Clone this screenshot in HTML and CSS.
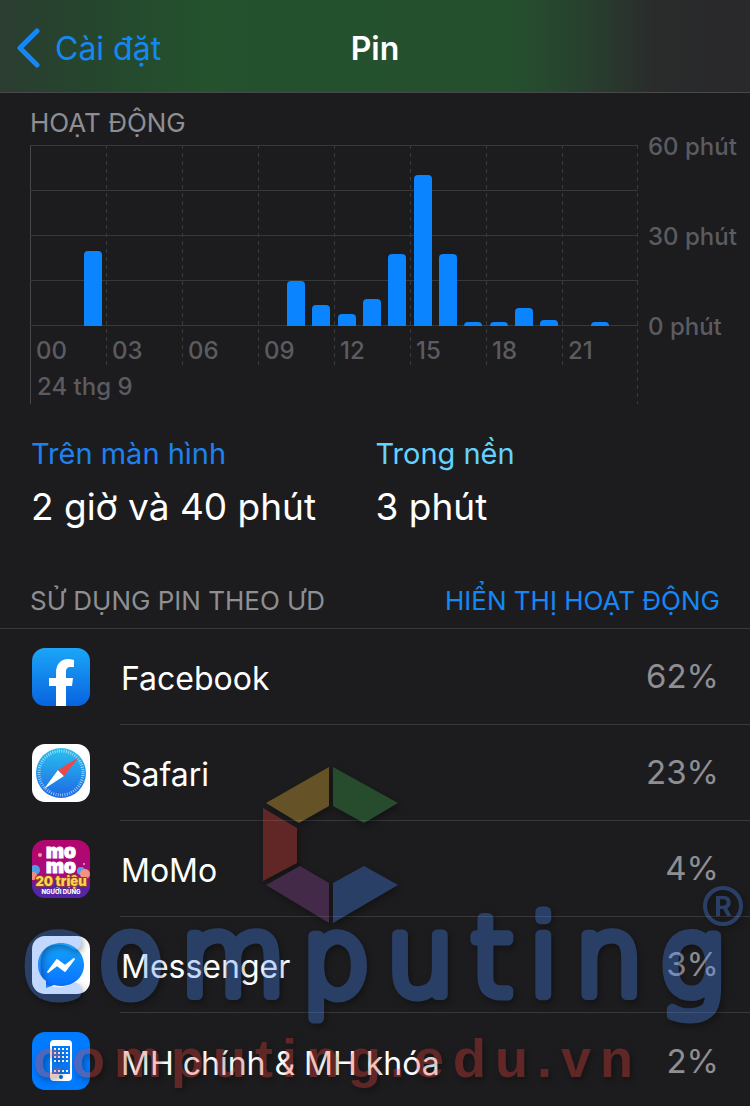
FILE: index.html
```html
<!DOCTYPE html>
<html lang="vi">
<head>
<meta charset="utf-8">
<meta name="viewport" content="width=device-width, initial-scale=1">
<title>Pin</title>
<link rel="stylesheet" href="styles.css">
</head>
<body>
<div class="screen">
  <header class="nav">
    <a class="back" href="#"><svg class="chevron" viewBox="0 0 24 40" aria-hidden="true"><path d="M20 3 3 20l17 17"/></svg>Cài đặt</a>
    <h1 class="nav-title">Pin</h1>
  </header>

  <main>
    <section>
      <h2 class="caption activity">Hoạt động</h2>
      <div class="chart">
        <div class="day">
          <div class="hours">
            <div class="slot"><div class="bars"><i></i><i></i><i style="height:41.7%"></i></div><span>00</span></div>
            <div class="slot"><div class="bars"></div><span>03</span></div>
            <div class="slot"><div class="bars"></div><span>06</span></div>
            <div class="slot"><div class="bars"><i></i><i style="height:25%"></i><i style="height:11.7%"></i></div><span>09</span></div>
            <div class="slot"><div class="bars"><i style="height:6.7%"></i><i style="height:15%"></i><i style="height:40%"></i></div><span>12</span></div>
            <div class="slot"><div class="bars"><i style="height:83.3%"></i><i style="height:40%"></i><i style="height:2%"></i></div><span>15</span></div>
            <div class="slot"><div class="bars"><i style="height:2%"></i><i style="height:10%"></i><i style="height:3.3%"></i></div><span>18</span></div>
            <div class="slot"><div class="bars"><i></i><i style="height:2%"></i><i></i></div><span>21</span></div>
          </div>
          <div class="date">24 thg 9</div>
        </div>
        <div class="scale"><span>60 phút</span><span>30 phút</span><span>0 phút</span></div>
      </div>
    </section>

    <section class="totals">
      <div><div class="label screen-on">Trên màn hình</div><div class="value">2 giờ và 40 phút</div></div>
      <div><div class="label background">Trong nền</div><div class="value">3 phút</div></div>
    </section>

    <section class="usage">
      <div class="usage-head">
        <h2 class="caption">Sử dụng pin theo ƯD</h2>
        <button class="caption toggle" type="button">Hiển thị hoạt động</button>
      </div>
      <ul class="apps">
        <li class="app">
          <svg class="icon" viewBox="0 0 58 58" aria-hidden="true">
            <defs><linearGradient id="fb" x2="0" y2="1"><stop stop-color="#1ba6f8"/><stop offset="1" stop-color="#0863df"/></linearGradient></defs>
            <rect width="58" height="58" rx="13" fill="url(#fb)"/>
            <path fill="#fff" d="M24 58V38h-7v-8h7v-5c0-9 5-14 12-14q3 0 6 1v7h-3c-4 0-5 2-5 5v6h7l-1 8h-6v20z"/>
          </svg>
          <div class="row"><span>Facebook</span><span class="percent">62%</span></div>
        </li>
        <li class="app">
          <svg class="icon" viewBox="0 0 58 58" aria-hidden="true">
            <defs><linearGradient id="sf" x2="0" y2="1"><stop stop-color="#2bc0ed"/><stop offset="1" stop-color="#1c68e4"/></linearGradient></defs>
            <rect width="58" height="58" rx="13" fill="#fff"/>
            <circle cx="29" cy="29" r="25" fill="url(#sf)"/>
            <circle cx="29" cy="29" r="22" fill="none" stroke="#e8f8ff" stroke-width="3" stroke-dasharray="0.7 1.6" opacity=".8"/>
            <path fill="#fff" d="m12 45 14-19 6 6z"/><path fill="#ef4747" d="m47 13-21 13 6 6z"/>
          </svg>
          <div class="row"><span>Safari</span><span class="percent">23%</span></div>
        </li>
        <li class="app">
          <svg class="icon" viewBox="0 0 58 58" aria-hidden="true">
            <defs><linearGradient id="mm" x2="0" y2="1"><stop stop-color="#b3066e"/><stop offset=".6" stop-color="#a90a7a"/><stop offset="1" stop-color="#4d2198"/></linearGradient><clipPath id="mc"><rect width="58" height="58" rx="13"/></clipPath></defs>
            <g clip-path="url(#mc)">
              <rect width="58" height="58" fill="url(#mm)"/>
              <path fill="#5426a5" d="M0 44q29-8 58 0v14H0z"/>
              <circle cx="3" cy="30" r="5" fill="#4e9ee5"/><circle cx="1" cy="36" r="4" fill="#f18b80"/>
              <circle cx="49" cy="31" r="4" fill="#4ba3ea"/><circle cx="53" cy="34" r="5" fill="#f39184"/>
              <circle cx="8" cy="15" r="2" fill="#f49a94"/><circle cx="52" cy="24" r="1" fill="#f3a7be"/>
              <text class="momo" x="29" y="18">mo</text>
              <text class="momo" x="29" y="33">mo</text>
              <text class="million" x="29" y="46">20 triệu</text>
              <text class="people" x="29" y="54">NGƯỜI DÙNG</text>
            </g>
          </svg>
          <div class="row"><span>MoMo</span><span class="percent">4%</span></div>
        </li>
        <li class="app">
          <svg class="icon" viewBox="0 0 58 58" aria-hidden="true">
            <defs><linearGradient id="ms" x2="0" y2="1"><stop stop-color="#15a4fc"/><stop offset="1" stop-color="#0870ff"/></linearGradient></defs>
            <rect width="58" height="58" rx="13" fill="#fff"/>
            <path fill="url(#ms)" d="M29 7C16 7 6 16 6 29c0 7 3 12 8 16v7l8-3q3 1 7 1c13 0 23-9 23-21S42 7 29 7z"/>
            <path fill="#fff" stroke="#fff" stroke-width="2" stroke-linejoin="round" d="m16 36 9-12 8 6 9-7-9 12-8-6z"/>
          </svg>
          <div class="row"><span>Messenger</span><span class="percent">3%</span></div>
        </li>
        <li class="app">
          <svg class="icon" viewBox="0 0 58 58" aria-hidden="true">
            <rect width="58" height="58" rx="13" fill="#007aff"/>
            <rect x="18" y="8" width="22" height="41" rx="4" fill="#fff"/>
            <path fill="#0879f5" d="M20 14h18v28H20z"/>
            <path stroke="#fff" stroke-width="2" stroke-dasharray="2 2" d="M22 17h15M22 21h15M22 25h15M22 29h15M22 39h15"/>
            <circle cx="29" cy="45" r="2" fill="#0868d8"/>
          </svg>
          <div class="row"><span>MH chính &amp; MH khóa</span><span class="percent">2%</span></div>
        </li>
      </ul>

      <svg class="watermark" viewBox="0 0 750 352" role="img" aria-label="Computing">
        <g>
          <path fill="#ffc537" d="m266 46 63-36v39l-30 17z"/>
          <path fill="#3baf4d" d="m333 10 65 36-34 20-31-17z"/>
          <path fill="#ee4137" d="m263 51 34 20v35l-34 18z"/>
          <path fill="#9348a2" d="m266 128 34-19 29 17v40z"/>
          <path fill="#4889ff" d="m333 126 31-17 34 19-65 38z"/>
        </g>
        <text class="wordmark" x="740" y="238">computing</text>
        <circle class="ring" cx="723" cy="149" r="18"/>
        <text class="registered" x="723" y="159">R</text>
        <text class="domain" x="33" y="320">computing.edu.vn</text>
      </svg>
    </section>
  </main>
</div>
</body>
</html>
```
FILE: styles.css
```css
* { box-sizing: border-box; }

body {
  margin: 0;
  background: #1c1c1e;
  color: #fff;
  font-family: Inter, "Liberation Sans", sans-serif;
}

h1, h2, ul { margin: 0; padding: 0; }

.screen { overflow: hidden; }

.nav {
  display: grid;
  grid-template-columns: 1fr auto 1fr;
  align-items: center;
  height: 93px;
  padding: 4px 17px 0;
  border-bottom: 1px solid #48484a;
  background: linear-gradient(to right, #2b3d31 0, #25462d 12%, #24522d 27%, #24502e 68%, #28402f 78%, #2a2c2b 87%, #29282c 100%);
}

.back {
  display: flex;
  align-items: center;
  gap: 14px;
  color: #1687f6;
  font-size: 32px;
  text-decoration: none;
}

.chevron {
  width: 24px;
  height: 40px;
  fill: none;
  stroke: currentColor;
  stroke-width: 5;
  stroke-linecap: round;
  stroke-linejoin: round;
}

.nav-title { font-size: 32px; font-weight: 600; }

.caption {
  color: #8e8e93;
  font-size: 26px;
  font-weight: 400;
  line-height: 32px;
  text-transform: uppercase;
}

.activity { padding: 14px 30px 6px; }

.chart {
  display: grid;
  grid-template-columns: 1fr 112px;
  padding-left: 30px;
  color: #5b5b60;
  font-size: 24px;
  font-weight: 500;
}

.day {
  border-left: 1px solid #48484a;
  background: repeating-linear-gradient(to bottom, #3a3a3c 0 4px, transparent 4px 8px) right / 1px 100% no-repeat;
}

.hours {
  display: grid;
  grid-template-columns: repeat(8, 1fr);
  margin-left: -1px;
  background: repeating-linear-gradient(to bottom, #38383a 0 1px, transparent 1px 45px) top / 100% 181px no-repeat;
}

.slot {
  height: 222px;
  background: repeating-linear-gradient(to bottom, #3a3a3c 0 4px, transparent 4px 8px) left / 1px 100% no-repeat;
}

.slot:first-child { background: none; }

.slot span { display: block; padding: 9px 0 0 6px; line-height: 32px; }

.bars {
  display: grid;
  grid-template-columns: repeat(3, 1fr);
  align-items: end;
  justify-items: center;
  height: 181px;
}

.bars i { width: 18px; border-radius: 4px 4px 0 0; background: #0a84ff; }

.date { padding: 4px 6px 1px; line-height: 32px; }

.scale {
  display: flex;
  flex-direction: column;
  justify-content: space-between;
  height: 212px;
  margin-top: -14px;
  padding-left: 10px;
  line-height: 32px;
  white-space: nowrap;
}

.totals {
  display: grid;
  grid-template-columns: 1fr 1fr;
  padding: 32px 30px 0 31px;
}

.label { font-size: 29px; line-height: 36px; }
.screen-on { color: #1d82ee; }
.background { color: #64d2ff; }
.value { padding-top: 10px; font-size: 37px; line-height: 50px; }

.usage { position: relative; padding-top: 53px; }

.usage-head {
  display: flex;
  justify-content: space-between;
  padding: 0 30px 11px;
  border-bottom: 1px solid #38383a;
}

.toggle {
  padding: 0;
  border: 0;
  background: none;
  color: #1687f6;
  font-family: inherit;
}

.apps { list-style: none; font-size: 32px; }

.app { display: flex; align-items: center; gap: 30px; padding-left: 32px; }

.icon { flex: none; width: 58px; height: 58px; }

.row {
  display: flex;
  flex: 1;
  align-items: center;
  justify-content: space-between;
  height: 96px;
  padding: 4px 31px 0 1px;
  border-bottom: 1px solid #38383a;
}

.app:last-child .row { border-bottom: 0; }

.percent { padding-bottom: 5px; color: #8e8e93; font-size: 33px; }

.momo, .million, .people {
  font-family: Inter, sans-serif;
  text-anchor: middle;
}
.momo { fill: #fff; stroke: #fff; stroke-width: 1px; font-size: 19px; font-weight: 900; }
.million { fill: #ffd34d; stroke: #8c3d38; stroke-width: 2px; paint-order: stroke; font-size: 13px; font-weight: 900; }
.people { fill: #fff; font-size: 6px; font-weight: 800; }

.watermark {
  position: absolute;
  right: 0;
  bottom: 0;
  width: 100%;
  opacity: 0.32;
  pointer-events: none;
  filter: drop-shadow(2px 3px 3px #000);
}

.wordmark {
  fill: #4889ff;
  stroke: #4889ff;
  stroke-width: 11px;
  stroke-linejoin: round;
  font-family: "DejaVu Sans", sans-serif;
  font-size: 108px;
  font-weight: 200;
  letter-spacing: 16px;
  text-anchor: end;
}

.ring { fill: none; stroke: #4889ff; stroke-width: 4px; }
.registered { fill: #4889ff; font-size: 27px; font-weight: 700; text-anchor: middle; }

.domain {
  fill: #ee4137;
  font-family: "Liberation Sans", sans-serif;
  font-size: 54px;
  font-weight: 700;
  letter-spacing: 9px;
}
```
